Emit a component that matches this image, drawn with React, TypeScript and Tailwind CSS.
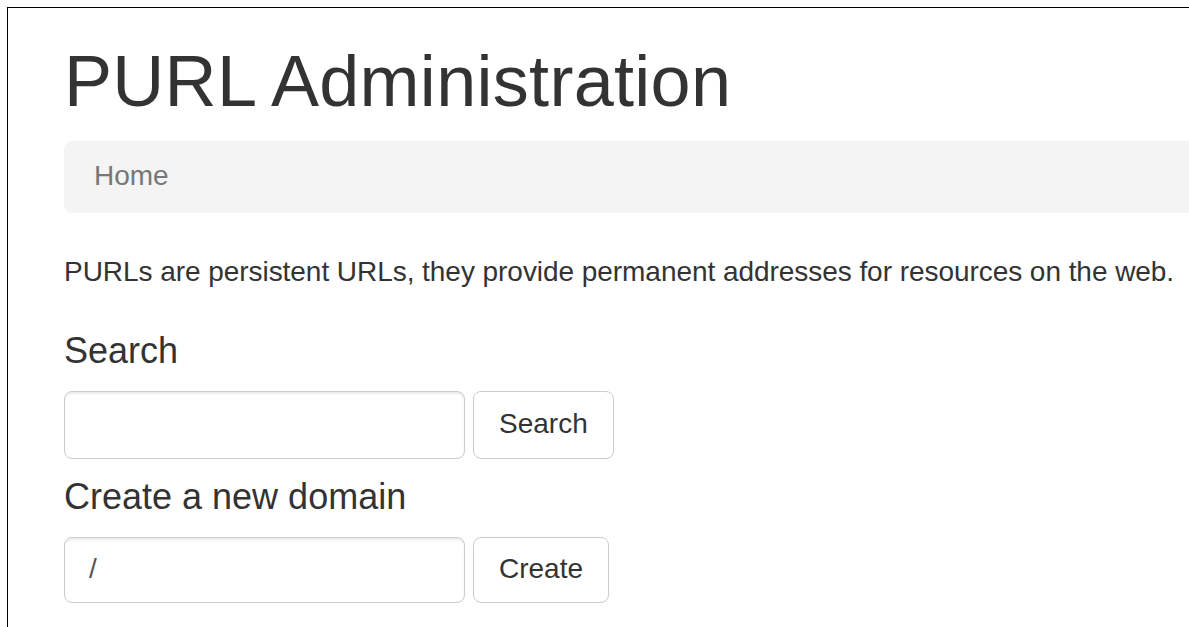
export default function App() {
  return (
    <div className="h-[627px] w-[1189px] overflow-hidden bg-white" style={{ fontFamily: '"Liberation Sans", Arial, sans-serif' }}>
      <div className="ml-[7px] mt-[7px] h-[700px] w-[1300px] border-l border-t border-black bg-white pl-[56px] text-[#333]">
        <h1 className="mt-[34px] text-[72px] leading-[78px] tracking-[0.3px] font-normal">PURL Administration</h1>
        <nav className="mt-[21px] flex h-[72px] w-[1200px] items-center rounded-[8px] bg-[#f4f4f4] px-[30px] pb-[3px] text-[28px] text-[#777]">
          Home
        </nav>
        <p className="mt-[39px] text-[28px] leading-[40px] tracking-[-0.05px]">
          PURLs are persistent URLs, they provide permanent addresses for resources on the web.
        </p>
        <h4 className="mt-[39px] text-[36px] leading-[40px]">Search</h4>
        <form className="mt-[20px] flex gap-[8px]" onSubmit={(e) => e.preventDefault()}>
          <input
            type="text"
            className="h-[68px] w-[401px] rounded-[8px] border border-[#ccc] px-[24px] text-[28px] text-[#555] shadow-[inset_0_2px_2px_rgba(0,0,0,0.075)] outline-none"
          />
          <button className="h-[68px] rounded-[8px] border border-[#ccc] bg-white px-[25px] pb-[2px] text-[28px] text-[#333]">
            Search
          </button>
        </form>
        <h4 className="mt-[18px] text-[36px] leading-[40px]">Create a new domain</h4>
        <form className="mt-[20px] flex gap-[8px]" onSubmit={(e) => e.preventDefault()}>
          <input
            type="text"
            defaultValue="/"
            className="h-[66px] w-[401px] rounded-[8px] border border-[#ccc] px-[24px] pb-[2px] text-[28px] text-[#555] shadow-[inset_0_2px_2px_rgba(0,0,0,0.075)] outline-none"
          />
          <button className="h-[66px] rounded-[8px] border border-[#ccc] bg-white px-[25px] pb-[2px] text-[28px] text-[#333]">
            Create
          </button>
        </form>
      </div>
    </div>
  );
}
